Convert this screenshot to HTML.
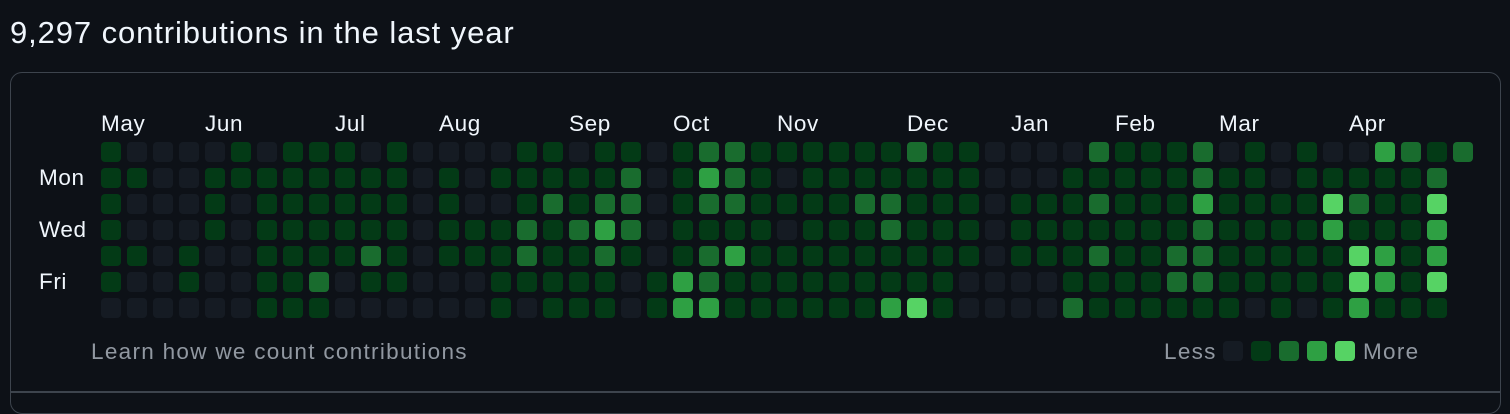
<!DOCTYPE html>
<html><head><meta charset="utf-8"><style>
html,body{margin:0;padding:0;background:#0d1117;width:1510px;height:404px;overflow:hidden;font-family:"Liberation Sans",Arial,sans-serif;color:#f0f6fc}
.t{position:absolute;left:10px;top:14px;font-size:31px;line-height:38px;letter-spacing:0.9px}
.box{position:absolute;left:10px;top:72px;width:1489px;height:340px;border:1px solid #3d444d;border-radius:12px}
.hr{position:absolute;left:11px;top:391px;width:1489px;height:2px;background:#3d444d}
.m,.d{position:absolute;font-size:22.5px;line-height:24px;color:#f0f6fc;letter-spacing:0.6px}
.c{position:absolute;width:20px;height:20px;border-radius:4px}
.g{position:absolute;font-size:22.5px;line-height:24px;color:#9198a1;letter-spacing:1.3px}
</style></head><body>
<div class="t">9,297 contributions in the last year</div>
<div class="box"></div>
<div class="hr"></div>
<div id="grid"></div>
<div class="m" style="left:101px;top:112px">May</div>
<div class="m" style="left:205px;top:112px">Jun</div>
<div class="m" style="left:335px;top:112px">Jul</div>
<div class="m" style="left:439px;top:112px">Aug</div>
<div class="m" style="left:569px;top:112px">Sep</div>
<div class="m" style="left:673px;top:112px">Oct</div>
<div class="m" style="left:777px;top:112px">Nov</div>
<div class="m" style="left:907px;top:112px">Dec</div>
<div class="m" style="left:1011px;top:112px">Jan</div>
<div class="m" style="left:1115px;top:112px">Feb</div>
<div class="m" style="left:1219px;top:112px">Mar</div>
<div class="m" style="left:1349px;top:112px">Apr</div>
<div class="d" style="left:39px;top:166px">Mon</div>
<div class="d" style="left:39px;top:218px">Wed</div>
<div class="d" style="left:39px;top:270px">Fri</div>
<div class="g" style="left:91px;top:340px">Learn how we count contributions</div>
<div class="g" style="left:1164px;top:340px">Less</div>
<div class="c" style="left:1223px;top:341px;background:#151b23"></div>
<div class="c" style="left:1251px;top:341px;background:#033a16"></div>
<div class="c" style="left:1279px;top:341px;background:#196c2e"></div>
<div class="c" style="left:1307px;top:341px;background:#2ea043"></div>
<div class="c" style="left:1335px;top:341px;background:#56d364"></div>
<div class="g" style="left:1363px;top:340px">More</div>
<script>
var rows=[
"100001011101000011"+"011012211111121100"+"00211120101003212",
"110011111111010111"+"112013210111111100"+"0111112110111112",
"100010111111010012"+"122012211112211101"+"1121113111142114",
"100010111111011121"+"232011110111211101"+"1111112111131113",
"110100111121011121"+"121012311111111101"+"1121122111114313",
"100100112011000111"+"110132111111111000"+"0111122111114314",
"000000111000000101"+"110133111111341000"+"0211111101013111"
];
var cols=["#151b23","#033a16","#196c2e","#2ea043","#56d364"];
var h="";
for(var r=0;r<7;r++){var s=rows[r];for(var c=0;c<s.length;c++){h+='<div class="c" style="left:'+(101+26*c)+'px;top:'+(142+26*r)+'px;background:'+cols[+s[c]]+'"></div>';}}
document.getElementById("grid").innerHTML=h;
</script>
</body></html>
